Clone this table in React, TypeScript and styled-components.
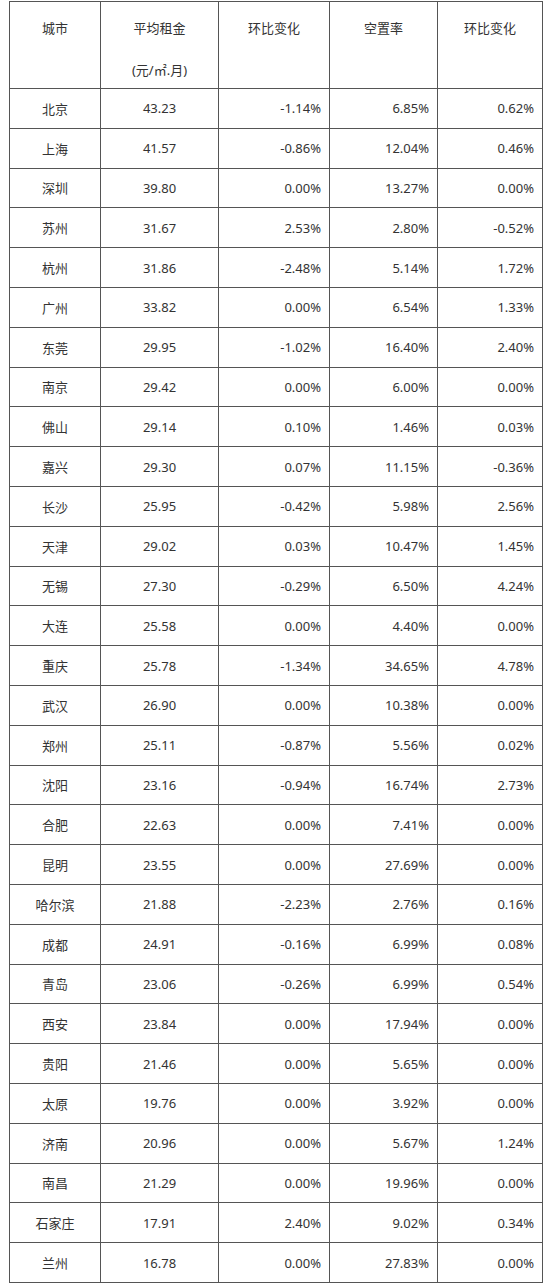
import React from "react";
import styled, { createGlobalStyle } from "styled-components";

const GlobalStyle = createGlobalStyle`
  html, body {
    margin: 0;
    padding: 0;
    background: #ffffff;
  }
  body {
    font-family: "Noto Sans", "Noto Sans CJK SC", sans-serif;
    color: #333333;
  }
`;

type Row = [string, string, string, string, string];

const rows: Row[] = [
  ["北京", "43.23", "-1.14%", "6.85%", "0.62%"],
  ["上海", "41.57", "-0.86%", "12.04%", "0.46%"],
  ["深圳", "39.80", "0.00%", "13.27%", "0.00%"],
  ["苏州", "31.67", "2.53%", "2.80%", "-0.52%"],
  ["杭州", "31.86", "-2.48%", "5.14%", "1.72%"],
  ["广州", "33.82", "0.00%", "6.54%", "1.33%"],
  ["东莞", "29.95", "-1.02%", "16.40%", "2.40%"],
  ["南京", "29.42", "0.00%", "6.00%", "0.00%"],
  ["佛山", "29.14", "0.10%", "1.46%", "0.03%"],
  ["嘉兴", "29.30", "0.07%", "11.15%", "-0.36%"],
  ["长沙", "25.95", "-0.42%", "5.98%", "2.56%"],
  ["天津", "29.02", "0.03%", "10.47%", "1.45%"],
  ["无锡", "27.30", "-0.29%", "6.50%", "4.24%"],
  ["大连", "25.58", "0.00%", "4.40%", "0.00%"],
  ["重庆", "25.78", "-1.34%", "34.65%", "4.78%"],
  ["武汉", "26.90", "0.00%", "10.38%", "0.00%"],
  ["郑州", "25.11", "-0.87%", "5.56%", "0.02%"],
  ["沈阳", "23.16", "-0.94%", "16.74%", "2.73%"],
  ["合肥", "22.63", "0.00%", "7.41%", "0.00%"],
  ["昆明", "23.55", "0.00%", "27.69%", "0.00%"],
  ["哈尔滨", "21.88", "-2.23%", "2.76%", "0.16%"],
  ["成都", "24.91", "-0.16%", "6.99%", "0.08%"],
  ["青岛", "23.06", "-0.26%", "6.99%", "0.54%"],
  ["西安", "23.84", "0.00%", "17.94%", "0.00%"],
  ["贵阳", "21.46", "0.00%", "5.65%", "0.00%"],
  ["太原", "19.76", "0.00%", "3.92%", "0.00%"],
  ["济南", "20.96", "0.00%", "5.67%", "1.24%"],
  ["南昌", "21.29", "0.00%", "19.96%", "0.00%"],
  ["石家庄", "17.91", "2.40%", "9.02%", "0.34%"],
  ["兰州", "16.78", "0.00%", "27.83%", "0.00%"],
];

const colWidths = [91, 118, 111, 108, 105];

const Page = styled.div`
  padding: 1px 0 0 9px;
`;

const Table = styled.table`
  border-collapse: separate;
  border-spacing: 0;
  table-layout: fixed;
  width: 534px;
  border-left: 1px solid #555555;
  border-top: 1px solid #555555;
  font-size: 13px;
`;

const HeadCell = styled.th`
  font-weight: normal;
  vertical-align: top;
  text-align: center;
  padding: 0 0 7px;
  height: 79px;
  border-right: 1px solid #555555;
  border-bottom: 1px solid #555555;
`;

const HeadLine = styled.div<{ $gap: number }>`
  line-height: 20px;
  margin-top: ${(p) => p.$gap}px;
`;

const DataRow = styled.tr`
  height: 39.8px;
`;

const Cell = styled.td<{ $align: "center" | "right" }>`
  text-align: ${(p) => p.$align};
  padding: 0 ${(p) => (p.$align === "right" ? "8px" : "0")} 0 0;
  border-right: 1px solid #555555;
  border-bottom: 1px solid #555555;
  white-space: nowrap;
`;

export default function App() {
  return (
    <>
      <GlobalStyle />
      <Page>
        <Table>
          <colgroup>
            {colWidths.map((w, i) => (
              <col key={i} style={{ width: w }} />
            ))}
          </colgroup>
          <thead>
            <tr>
              <HeadCell>
                <HeadLine $gap={16}>城市</HeadLine>
              </HeadCell>
              <HeadCell>
                <HeadLine $gap={16}>平均租金</HeadLine>
                <HeadLine $gap={22}>(元/㎡.月)</HeadLine>
              </HeadCell>
              <HeadCell>
                <HeadLine $gap={16}>环比变化</HeadLine>
              </HeadCell>
              <HeadCell>
                <HeadLine $gap={16}>空置率</HeadLine>
              </HeadCell>
              <HeadCell>
                <HeadLine $gap={16}>环比变化</HeadLine>
              </HeadCell>
            </tr>
          </thead>
          <tbody>
            {rows.map((r) => (
              <DataRow key={r[0]}>
                <Cell $align="center">{r[0]}</Cell>
                <Cell $align="center">{r[1]}</Cell>
                <Cell $align="right">{r[2]}</Cell>
                <Cell $align="right">{r[3]}</Cell>
                <Cell $align="right">{r[4]}</Cell>
              </DataRow>
            ))}
          </tbody>
        </Table>
      </Page>
    </>
  );
}
